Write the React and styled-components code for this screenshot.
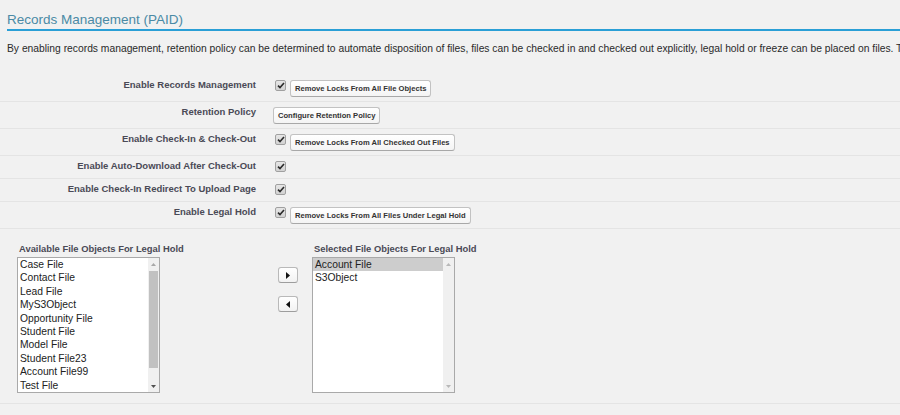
import React from "react";
import styled, { createGlobalStyle } from "styled-components";

const GlobalStyle = createGlobalStyle`
  html, body {
    margin: 0;
    padding: 0;
    background: #f1f1f1;
    overflow: hidden;
  }
  body {
    font-family: "Liberation Sans", Arial, sans-serif;
    color: #222;
  }
`;

const Page = styled.div`
  width: 900px;
  height: 415px;
  overflow: hidden;
  background: #f1f1f1;
`;

const Header = styled.h2`
  margin: 0 0 0 7px;
  padding: 11px 0 1px;
  font-size: 13.5px;
  line-height: 17px;
  font-weight: normal;
  color: #4a8aa5;
  border-bottom: 2px solid #2a9fd6;
`;

const Description = styled.p`
  margin: 12px 0 0 7px;
  font-size: 10.3px;
  line-height: 12px;
  color: #2a2a2a;
  white-space: nowrap;
`;

const Form = styled.div`
  margin-top: 20px;
`;

const Row = styled.div`
  display: grid;
  grid-template-columns: 256px 1fr;
  border-bottom: 1px solid #e4e4e4;
`;

const Label = styled.div`
  text-align: right;
  padding-top: 4px;
  font-size: 9.5px;
  line-height: 12px;
  font-weight: bold;
  color: #4a4a56;
`;

const Data = styled.div`
  display: flex;
  align-items: flex-start;
  padding: 5px 0 4px 17px;
`;

const Check = styled.span`
  display: inline-flex;
  align-items: center;
  justify-content: center;
  box-sizing: border-box;
  width: 11px;
  height: 11px;
  margin: 0 4px 2px 2px;
  border: 1px solid #a0a0a0;
  border-radius: 2px;
  background: linear-gradient(#e6e6e6, #d2d2d2);
`;

const Btn = styled.button`
  box-sizing: border-box;
  height: 17px;
  padding: 0 4px;
  margin: 0;
  font-family: "Liberation Sans", Arial, sans-serif;
  font-size: 7.6px;
  font-weight: bold;
  color: #333;
  background: linear-gradient(#ffffff, #f4f4f4);
  border: 1px solid #c2c2c2;
  border-bottom-color: #a8a8a8;
  border-radius: 3px;
  white-space: nowrap;
`;

const PickSection = styled.div`
  display: flex;
  align-items: flex-start;
  padding: 14px 0 10px 17px;
  border-bottom: 1px solid #e4e4e4;
`;

const PickColumn = styled.div`
  display: flex;
  flex-direction: column;
  width: 143px;
  flex: none;
  margin-left: ${(p) => p.$offset || 0}px;
`;

const PickLabel = styled.div`
  padding-left: 2px;
  margin-bottom: 2px;
  font-size: 9.4px;
  line-height: 12px;
  font-weight: bold;
  color: #4a4a56;
  white-space: nowrap;
`;

const ListBox = styled.div`
  box-sizing: border-box;
  display: flex;
  width: 143px;
  height: 136px;
  border: 1px solid #a9a9a9;
  background: #fff;
`;

const Options = styled.div`
  flex: 1;
  overflow: hidden;
`;

const Option = styled.div`
  padding-left: 2px;
  font-size: 10.3px;
  line-height: 13.4px;
  color: #222;
  white-space: nowrap;
  background: ${(p) => (p.$selected ? "#cdcdcd" : "transparent")};
`;

const ScrollBar = styled.div`
  width: 11px;
  display: flex;
  flex-direction: column;
  background: #f0f0f0;
`;

const ScrollArrow = styled.div`
  height: 12px;
  display: flex;
  align-items: center;
  justify-content: center;
`;

const ScrollTrack = styled.div`
  flex: 1;
  display: flex;
  flex-direction: column;
`;

const Thumb = styled.div`
  margin: 1px 1px 0;
  height: 97px;
  background: #c1c1c1;
`;

const MoveColumn = styled.div`
  display: flex;
  flex-direction: column;
  flex: none;
  gap: 13px;
  margin-left: 118px;
  margin-top: 24px;
`;

const MoveBtn = styled.button`
  box-sizing: border-box;
  width: 20px;
  height: 16px;
  padding: 0;
  display: flex;
  align-items: center;
  justify-content: center;
  background: linear-gradient(#ffffff, #f2f2f2);
  border: 1px solid #b9b9b9;
  border-bottom-color: #9d9d9d;
  border-radius: 3px;
`;

const CheckMark = () => (
  <svg width="8" height="7" viewBox="0 0 8 7">
    <path d="M1 3.6 L3 5.6 L7 1" fill="none" stroke="#2a2a2a" strokeWidth="1.6" />
  </svg>
);

const Tri = ({ dir, color }) => (
  <svg width="5" height="3" viewBox="0 0 5 3">
    <path d={dir === "up" ? "M0 3 L2.5 0 L5 3 Z" : "M0 0 L2.5 3 L5 0 Z"} fill={color} />
  </svg>
);

const MoveArrow = ({ dir }) => (
  <svg width="4" height="7" viewBox="0 0 4 7">
    <path d={dir === "right" ? "M0 0 L4 3.5 L0 7 Z" : "M4 0 L0 3.5 L4 7 Z"} fill="#111" />
  </svg>
);

const Checkbox = () => (
  <Check>
    <CheckMark />
  </Check>
);

const rows = [
  { label: "Enable Records Management", check: true, button: "Remove Locks From All File Objects" },
  { label: "Retention Policy", check: false, button: "Configure Retention Policy" },
  { label: "Enable Check-In & Check-Out", check: true, button: "Remove Locks From All Checked Out Files" },
  { label: "Enable Auto-Download After Check-Out", check: true },
  { label: "Enable Check-In Redirect To Upload Page", check: true },
  { label: "Enable Legal Hold", check: true, button: "Remove Locks From All Files Under Legal Hold" },
];

const available = [
  "Case File",
  "Contact File",
  "Lead File",
  "MyS3Object",
  "Opportunity File",
  "Student File",
  "Model File",
  "Student File23",
  "Account File99",
  "Test File",
];

const selected = ["Account File", "S3Object"];

export default function App() {
  return (
    <Page>
      <GlobalStyle />
      <Header>Records Management (PAID)</Header>
      <Description>
        By enabling records management, retention policy can be determined to automate disposition of files, files can be
        checked in and checked out explicitly, legal hold or freeze can be placed on files. The
      </Description>
      <Form>
        {rows.map((r) => (
          <Row key={r.label}>
            <Label>{r.label}</Label>
            <Data>
              {r.check && <Checkbox />}
              {r.button && <Btn>{r.button}</Btn>}
            </Data>
          </Row>
        ))}
      </Form>
      <PickSection>
        <PickColumn>
          <PickLabel>Available File Objects For Legal Hold</PickLabel>
          <ListBox>
            <Options>
              {available.map((o) => (
                <Option key={o}>{o}</Option>
              ))}
            </Options>
            <ScrollBar>
              <ScrollArrow>
                <Tri dir="up" color="#a8a8a8" />
              </ScrollArrow>
              <ScrollTrack>
                <Thumb />
              </ScrollTrack>
              <ScrollArrow>
                <Tri dir="down" color="#505050" />
              </ScrollArrow>
            </ScrollBar>
          </ListBox>
        </PickColumn>
        <MoveColumn>
          <MoveBtn>
            <MoveArrow dir="right" />
          </MoveBtn>
          <MoveBtn>
            <MoveArrow dir="left" />
          </MoveBtn>
        </MoveColumn>
        <PickColumn $offset={14}>
          <PickLabel>Selected File Objects For Legal Hold</PickLabel>
          <ListBox>
            <Options>
              {selected.map((o, i) => (
                <Option key={o} $selected={i === 0}>
                  {o}
                </Option>
              ))}
            </Options>
            <ScrollBar>
              <ScrollArrow>
                <Tri dir="up" color="#b8b8b8" />
              </ScrollArrow>
              <ScrollTrack />
              <ScrollArrow>
                <Tri dir="down" color="#b8b8b8" />
              </ScrollArrow>
            </ScrollBar>
          </ListBox>
        </PickColumn>
      </PickSection>
    </Page>
  );
}
